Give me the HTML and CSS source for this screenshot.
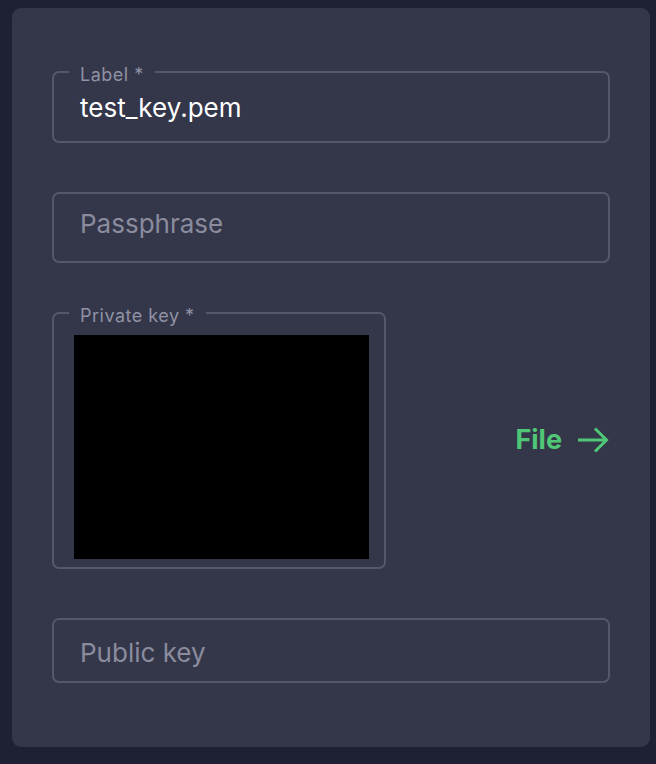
FILE: index.html
```html
<!DOCTYPE html>
<html>
<head>
<meta charset="utf-8">
<link rel="stylesheet" href="styles.css">
</head>
<body>
<div class="card">
  <fieldset class="field labeled">
    <legend>Label *</legend>
    <div class="value">test_key.pem</div>
  </fieldset>
  <fieldset class="field empty">
    <div class="placeholder">Passphrase</div>
  </fieldset>
  <div class="key-row">
    <fieldset class="field keybox">
      <legend>Private key *</legend>
      <div class="blackbox"></div>
    </fieldset>
    <button class="file-btn">File
      <svg width="34" height="26" viewBox="0 0 34 26"><path d="M2 13H31M19 1.5L30.5 13L19 24.5" fill="none" stroke="#4fc776" stroke-width="3"/></svg>
    </button>
  </div>
  <fieldset class="field empty short">
    <div class="placeholder">Public key</div>
  </fieldset>
</div>
</body>
</html>
```
FILE: styles.css
```css
html, body {
  margin: 0;
  padding: 0;
  background: #1e2033;
  font-family: "Inter", "Lato", sans-serif;
}
body {
  padding: 8px 6px 17px 12px;
}
.card {
  width: 558px;
  height: 687px;
  background: #343649;
  border-radius: 9px;
  padding: 52px 40px 0 40px;
  display: flex;
  flex-direction: column;
}
.field {
  margin: 0;
  border: 2px solid #55586c;
  border-radius: 7px;
  padding: 0 0 0 26px;
  min-width: 0;
}
.field legend {
  margin-left: -11px;
  padding: 6px 11px 0 11px;
  font-size: 18px;
  letter-spacing: 0.5px;
  color: #8f92a4;
  line-height: 18px;
}
.value {
  font-size: 26px;
  color: #ffffff;
  line-height: 40px;
  padding: 4px 0 13px 0;
}
.empty {
  margin-top: 49px;
}
.placeholder {
  font-size: 26px;
  color: #8a8c9e;
  line-height: 60px;
  padding-bottom: 7px;
}
.short .placeholder {
  line-height: 57px;
  padding: 4px 0 0 0;
}
.key-row {
  margin-top: 38px;
  display: flex;
  align-items: center;
  justify-content: space-between;
}
.keybox {
  width: 334px;
  box-sizing: border-box;
  padding: 10px 15px 8px 20px;
}
.keybox legend {
  margin-left: -5px;
}
.blackbox {
  width: 295px;
  height: 224px;
  background: #000;
}
.file-btn {
  background: none;
  border: none;
  padding: 9px 0 0 0;
  color: #4fc776;
  font-family: inherit;
  font-weight: 700;
  font-size: 27px;
  display: flex;
  align-items: center;
  gap: 14px;
}
```
